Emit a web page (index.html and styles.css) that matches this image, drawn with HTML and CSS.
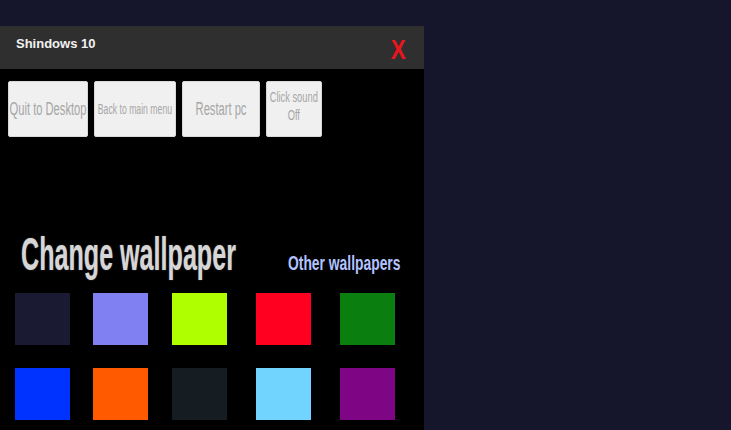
FILE: index.html
```html
<!DOCTYPE html>
<html lang="en">

<head>
    <meta charset="UTF-8">
    <meta name="viewport" content="width=device-width, initial-scale=1.0">
    <title>Shindows 10</title>
    <link rel="stylesheet" href="styles.css">
</head>

<body>
    <div class="window">
        <div class="titlebar">
            <span class="title">Shindows 10</span>
            <span class="close">X</span>
        </div>

        <div class="content">
            <div class="menu">
                <button class="btn btn-quit"><span class="label">Quit to Desktop</span></button>
                <button class="btn btn-back"><span class="label small">Back to main menu</span></button>
                <button class="btn btn-restart"><span class="label">Restart pc</span></button>
                <button class="btn btn-sound"><span class="label two">Click sound<br>Off</span></button>
            </div>

            <div class="wallpaper-head">
                <div class="heading"><span>Change wallpaper</span></div>
                <a class="other" href="#"><span>Other wallpapers</span></a>
            </div>

            <div class="swatches">
                <div class="swatch" style="background:#1a1a33"></div>
                <div class="swatch" style="background:#8080f2"></div>
                <div class="swatch" style="background:#b0ff00"></div>
                <div class="swatch" style="background:#ff0020"></div>
                <div class="swatch" style="background:#0a7f10"></div>
                <div class="swatch" style="background:#0033ff"></div>
                <div class="swatch" style="background:#ff5a00"></div>
                <div class="swatch" style="background:#151c22"></div>
                <div class="swatch" style="background:#70d4ff"></div>
                <div class="swatch" style="background:#7e0685"></div>
            </div>
        </div>
    </div>
</body>

</html>
```

FILE: styles.css
```css
body {
    margin: 0;
    padding: 0;
    background-color: #15152b;
    font-family: "Liberation Sans", Arial, sans-serif;
    overflow: hidden;
}

.window {
    width: 424px;
    margin-top: 26px;
    height: 404px;
    background-color: #000;
}

.titlebar {
    height: 43px;
    background-color: #2f2f2f;
    display: flex;
    align-items: center;
    justify-content: space-between;
    padding: 0 16px;
}

.title {
    color: #f2f2f2;
    font-size: 13px;
    font-weight: bold;
    margin-top: -9px;
}

.close {
    color: #e8161e;
    font-size: 28px;
    font-weight: bold;
    line-height: 1;
    margin-right: 0;
    margin-top: 4px;
    transform: scaleX(0.8);
}

.content {
    padding: 12px 0 0 8px;
}

.menu {
    display: flex;
    gap: 6px;
}

.btn {
    height: 56px;
    padding: 0;
    display: flex;
    align-items: center;
    justify-content: center;
    background-color: #f0f0f0;
    border: 1px solid #d8d8d8;
    border-radius: 2px;
    color: #a6a6a6;
    font-family: "Liberation Sans", Arial, sans-serif;
    overflow: visible;
}

.btn-quit { width: 80px; }
.btn-back { width: 82px; }
.btn-restart { width: 78px; }
.btn-sound { width: 56px; }

.label {
    display: inline-block;
    white-space: nowrap;
    font-size: 18px;
    transform: scaleX(0.62);
}

.label.small {
    font-size: 14px;
}

.label.two {
    font-size: 15px;
    line-height: 18px;
    text-align: center;
    margin-top: -6px;
}

.wallpaper-head {
    display: flex;
    align-items: baseline;
    margin-top: 92px;
    padding-left: 13px;
}

.heading {
    width: 267px;
    font-size: 46px;
    font-weight: bold;
    line-height: 50px;
    color: #d6d6d6;
    white-space: nowrap;
}

.heading span {
    display: inline-block;
    transform: scaleX(0.546);
    transform-origin: left;
    text-shadow: 0 0 2px #555;
}

.other {
    color: #b3c3ff;
    font-size: 21px;
    font-weight: bold;
    text-decoration: none;
    white-space: nowrap;
}

.other span {
    display: inline-block;
    transform: scaleX(0.66);
    transform-origin: left;
}

.swatches {
    display: grid;
    grid-template-columns: 78px 79px 84px 84px 55px;
    row-gap: 23px;
    margin-top: 14px;
    padding-left: 7px;
}

.swatch {
    width: 55px;
    height: 52px;
}
```
